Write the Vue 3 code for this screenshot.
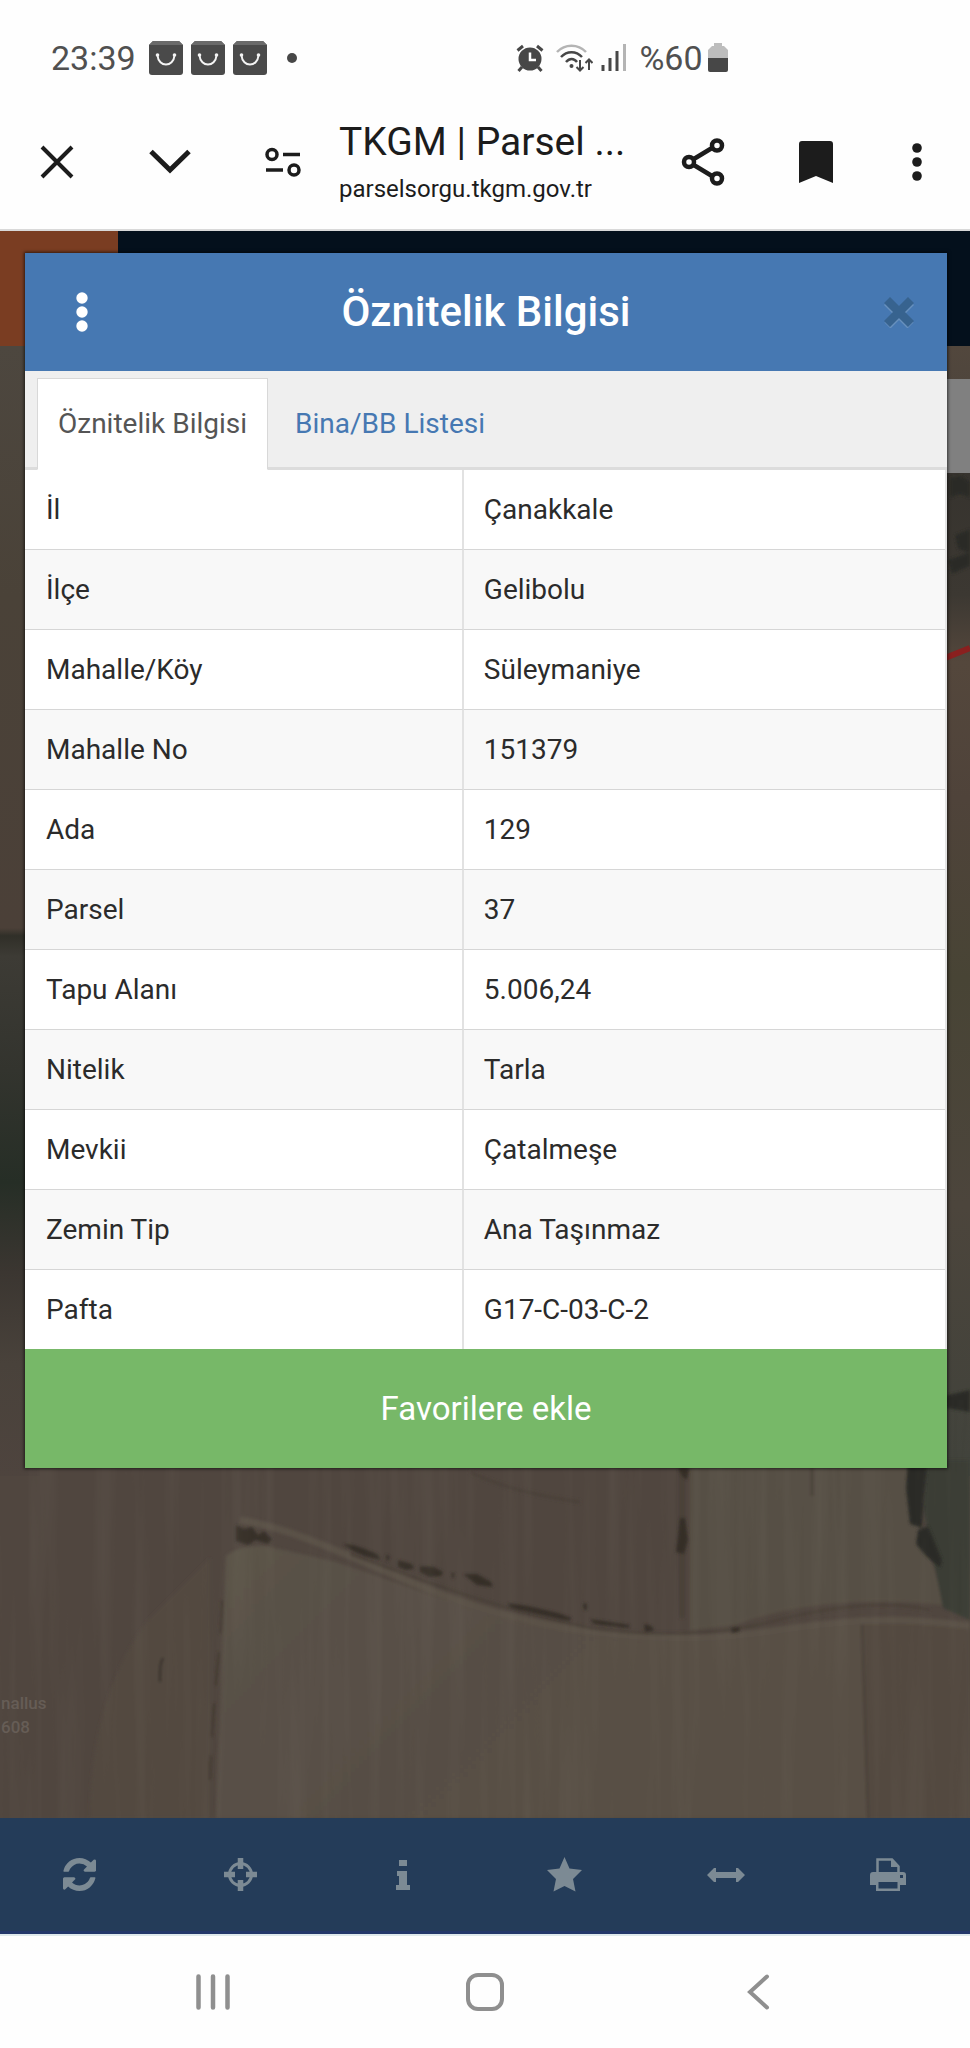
<script setup>
import { ref } from 'vue'

const rows = [
  ['İl', 'Çanakkale'],
  ['İlçe', 'Gelibolu'],
  ['Mahalle/Köy', 'Süleymaniye'],
  ['Mahalle No', '151379'],
  ['Ada', '129'],
  ['Parsel', '37'],
  ['Tapu Alanı', '5.006,24'],
  ['Nitelik', 'Tarla'],
  ['Mevkii', 'Çatalmeşe'],
  ['Zemin Tip', 'Ana Taşınmaz'],
  ['Pafta', 'G17-C-03-C-2'],
]

const tabs = ['Öznitelik Bilgisi', 'Bina/BB Listesi']
const activeTab = ref(0)
</script>

<template>
  <div class="screen">
    <div class="status">
      <div class="status-group">
        <span class="status-text">23:39</span>
        <div class="bags">
          <svg v-for="n in 3" :key="n" width="34" height="34" viewBox="0 0 34 34">
            <path d="M4 0h26l4 4v27a3 3 0 0 1-3 3H3a3 3 0 0 1-3-3V4z" fill="#4a4a4a" />
            <path d="M4 0h26l4 4H0z" fill="#6a6a6a" />
            <path d="M8.500 14.500c1 12 16 12 17 0" fill="none" stroke="#f4f4f4" stroke-width="2" />
            <circle cx="8.500" cy="14" r="1.800" fill="#f4f4f4" />
            <circle cx="25.500" cy="14" r="1.800" fill="#f4f4f4" />
          </svg>
        </div>
        <span class="dot"></span>
      </div>
      <div class="status-group">
        <svg class="alarm" width="28" height="28" viewBox="0 0 28 28" fill="none" stroke="#474747">
          <circle cx="14" cy="15" r="11.500" fill="#474747" stroke="none" />
          <path d="M1.500 6.500 7 2M26.500 6.500 21 2M6 23l-3.500 4M22 23l3.500 4" stroke-width="3" />
          <path d="M14 8.500V16h6" stroke="#fff" stroke-width="2.500" />
        </svg>
        <svg class="wifi" width="37" height="28" viewBox="0 0 37 28" fill="none" stroke="#474747" stroke-width="2.500">
          <path d="M1 8c8-8.500 21-8.500 29 0" stroke="#b4b4b4" />
          <path d="M5 13c6-6.500 15-6.500 21 0M10 18c3.500-4 8-4 11 0" />
          <circle cx="15.500" cy="22" r="2" fill="#474747" stroke="none" />
          <path d="M24 16v10M20.500 23l3.500 3.500 3.500-3.500M33 26V16M29.500 19l3.500-3.500 3.500 3.500" stroke-width="2" />
        </svg>
        <svg class="signal" width="26" height="27" viewBox="0 0 26 27" stroke-width="3" stroke="#474747">
          <path d="M2 21v6M9 14v13M16 7v20" />
          <path d="M23.500 0v27" stroke="#b4b4b4" />
        </svg>
        <span class="status-text">%60</span>
        <svg class="battery" width="20" height="29" viewBox="0 0 20 29">
          <path d="M6 0h8v3h2l4 4v9H0V7l4-4h2z" fill="#bdbdbd" />
          <path d="M0 15h20v12a2 2 0 0 1-2 2H2a2 2 0 0 1-2-2z" fill="#474747" />
        </svg>
      </div>
    </div>

    <header class="browser">
      <button class="tool" aria-label="Kapat">
        <svg width="34" height="34" viewBox="0 0 34 34" fill="none" stroke="#1c1c1c" stroke-width="4">
          <path d="M2 2l30 30M32 2 2 32" />
        </svg>
      </button>
      <button class="tool" aria-label="Küçült">
        <svg width="44" height="28" viewBox="0 0 44 28" fill="none" stroke="#1c1c1c" stroke-width="5">
          <path d="M3 3.500l19 18.500 19-18.500" />
        </svg>
      </button>
      <button class="tool" aria-label="Site ayarları">
        <svg width="36" height="30" viewBox="0 0 36 30" fill="none" stroke="#1c1c1c" stroke-width="3.500">
          <circle cx="7" cy="7.500" r="5" />
          <circle cx="29" cy="23" r="5" />
          <path d="M18 7.500h17M1 23h17" />
        </svg>
      </button>
      <div class="address">
        <div class="page-title">TKGM | Parsel ...</div>
        <div class="page-url">parselsorgu.tkgm.gov.tr</div>
      </div>
      <button class="tool" aria-label="Paylaş">
        <svg width="44" height="48" viewBox="0 0 44 48" fill="none" stroke="#1c1c1c" stroke-width="4.500">
          <path d="M12 21.500 31 10M12 26.500 31 38" />
          <circle cx="8" cy="24" r="5" />
          <circle cx="36" cy="7.500" r="5" />
          <circle cx="36" cy="40.500" r="5" />
        </svg>
      </button>
      <button class="tool" aria-label="Yer imi">
        <svg width="34" height="42" viewBox="0 0 34 42">
          <path d="M3 0h28a3 3 0 0 1 3 3v39l-17-7-17 7V3a3 3 0 0 1 3-3z" fill="#1c1c1c" />
        </svg>
      </button>
      <button class="tool narrow" aria-label="Menü">
        <svg width="10" height="38" viewBox="0 0 10 38" fill="#1c1c1c">
          <circle cx="5" cy="5" r="4.800" />
          <circle cx="5" cy="19" r="4.800" />
          <circle cx="5" cy="33" r="4.800" />
        </svg>
      </button>
    </header>

    <main class="stage">
      <div class="backdrop">
        <div class="site-bar"><span class="site-logo"></span></div>
        <svg class="map" viewBox="0 346 970 1472" preserveAspectRatio="xMidYMax slice">
          <defs>
            <linearGradient id="leftEdge" x1="0" y1="0" x2="0" y2="1">
              <stop offset="0" stop-color="#4d473f" />
              <stop offset="0.220" stop-color="#4a4238" />
              <stop offset="0.515" stop-color="#4b4038" />
              <stop offset="0.522" stop-color="#302f28" />
              <stop offset="0.540" stop-color="#3d3b35" />
              <stop offset="0.640" stop-color="#33342e" />
              <stop offset="0.740" stop-color="#262e26" />
              <stop offset="0.820" stop-color="#3b3631" />
              <stop offset="0.900" stop-color="#49423b" />
              <stop offset="1" stop-color="#4e443e" />
            </linearGradient>
            <linearGradient id="rightEdge" x1="0" y1="0" x2="0" y2="1">
              <stop offset="0" stop-color="#52473d" />
              <stop offset="0.080" stop-color="#4a433c" />
              <stop offset="0.110" stop-color="#36332e" />
              <stop offset="0.220" stop-color="#3c3832" />
              <stop offset="0.280" stop-color="#54473c" />
              <stop offset="0.400" stop-color="#4f433a" />
              <stop offset="0.560" stop-color="#484435" />
              <stop offset="0.760" stop-color="#4c453c" />
              <stop offset="1" stop-color="#40423b" />
            </linearGradient>
            <linearGradient id="lowerField" x1="0" y1="0" x2="1" y2="0.400">
              <stop offset="0" stop-color="#5a5247" />
              <stop offset="0.500" stop-color="#574e45" />
              <stop offset="1" stop-color="#584f44" />
            </linearGradient>
            <filter id="streaks" x="0" y="0" width="1" height="1">
              <feTurbulence type="fractalNoise" baseFrequency="0.060 0.003" numOctaves="3" seed="4" />
              <feColorMatrix values="0 0 0 0 0.500  0 0 0 0 0.480  0 0 0 0 0.400  1.600 0 0 0 -0.680" />
            </filter>
            <filter id="soft"><feGaussianBlur stdDeviation="1.500" /></filter>
          </defs>

          <rect x="0" y="346" width="970" height="1472" fill="#50463f" />
          <rect x="0" y="346" width="40" height="1130" fill="url(#leftEdge)" />
          <rect x="930" y="346" width="40" height="1130" fill="url(#rightEdge)" />

          <g filter="url(#soft)">
            <path d="M90 1818c0-80 20-150 60-200l60-60v260z" fill="#524940" />
            <path d="M690 1460h215l20 80 20 65c-80-8-150-2-210 20l-45 5z" fill="#575045" />
            <path d="M925 1460h45v160l-27-12-20-100z" fill="#3b3c36" />
            <path d="M226 1556q12-11 40-10l70 16 95 33 90 28 100 15h80l90-10 71-11 6 201H216z" fill="url(#lowerField)" />
            <path d="M862 1620q40-12 108 10v188H868z" fill="#52483f" />
            <path d="M862 1624l6 194" stroke="#473e37" stroke-width="2" />
            <path d="M240 1520c60 10 110 38 190 70s170 48 260 48 150-30 280-12" fill="none" stroke="#5a5147" stroke-width="7" />
            <path d="M350 1554c80 30 160 58 240 74 60 9 130 7 180-6s110-24 160-12" fill="none" stroke="#463e36" stroke-width="2" />
            <path d="M682 1468v150" stroke="#483f39" stroke-width="5" />
            <path d="M222 1600c-1 50-10 100-12 180" fill="none" stroke="#40372f" stroke-width="2" stroke-dasharray="34 18" />
            <path d="M163 1658c-4 6-3 16-3 24" fill="none" stroke="#332c27" stroke-width="2" />
            <path d="M470 1472q40 20 110 30" fill="none" stroke="#4a4039" stroke-width="3" />
            <path d="M812 1468v28" stroke="#49423a" stroke-width="3" />
          </g>

          <g fill="#352d28" filter="url(#soft)">
            <path d="M236 1525l8 4 8-2 6 8 6-4 8 8-4 5-12-4-8 5-12-4z" />
            <path d="M343 1544l10 1 12 4 12 5 4 6-14-3-14-6z" />
            <path d="M386 1554l4 3-3 5zM398 1560l14 4 2 5-8 1-8-3z" />
            <path d="M420 1566l14 1 9 5-2 4-12 1-9-5z" />
            <path d="M451 1573l4 0-2 7zM463 1574l14 0 14 8 2 5-16-2z" />
            <path d="M508 1603l20 3 30 7 14 5-4 3-26-6-32-7z" />
            <path d="M590 1619l40 6-2 3-34-4zM644 1624l8 2 2 5-9 1zM731 1628l8-1 1 4-8 2z" />
            <path d="M583 1604l4-1v7h-3z" />
            <path d="M678 1468h11l-2 12-5-4zM680 1518l5 0 3 22-4 14-8-2 2-14z" />
          </g>
          <g fill="#2a2c28" filter="url(#soft)">
            <path d="M908 1460h20l-4 36-2 32-12-4-4-36z" />
            <path d="M918 1530l10-4 6 14 8 20-2 8-14-12-10-12z" />
            <path d="M950 478l12-2 8 6v16l-10-4-10 4zM955 535l15-6v24l-12-4zM948 560l22-8v14l-18 8z" />
            <path d="M944 1396l26-6v22l-24-4z" />
          </g>
          <path d="M930 664l40-16" stroke="#8a201f" stroke-width="6" />
          <rect x="0" y="1400" width="970" height="418" filter="url(#streaks)" opacity="0.070" />
          <rect x="945" y="379" width="25" height="94" fill="#808080" />
          <g class="map-label">
            <text x="1" y="1709">nallus</text>
            <text x="1" y="1733">608</text>
          </g>
        </svg>

        <nav class="map-tools">
          <button aria-label="Yenile">
            <svg width="33" height="33" viewBox="0 128 1536 1536" fill="currentColor">
              <path d="M1511 1056q0 5-1 7-64 268-268 434.500t-478 166.500q-146 0-282.500-55t-243.500-157l-129 129q-19 19-45 19t-45-19-19-45v-448q0-26 19-45t45-19h448q26 0 45 19t19 45-19 45l-137 137q71 66 161 102t187 36q134 0 250-65t186-179q11-17 53-117 8-23 30-23h192q13 0 22.500 9.500t9.500 22.500zm25-800v448q0 26-19 45t-45 19h-448q-26 0-45-19t-19-45 19-45l138-138q-148-137-349-137-134 0-250 65t-186 179q-11 17-53 117-8 23-30 23h-199q-13 0-22.500-9.500t-9.500-22.500v-7q65-268 270-434.500t480-166.500q146 0 284 55.500t245 156.500l130-129q19-19 45-19t45 19 19 45z" />
            </svg>
          </button>
          <button aria-label="Konum">
            <svg width="33" height="33" viewBox="0 0 33 33" fill="none" stroke="currentColor">
              <circle cx="16.500" cy="16.500" r="11" stroke-width="3" />
              <path d="M16.500 0v11M16.500 22v11M0 16.500h11M22 16.500h11" stroke-width="5.500" />
            </svg>
          </button>
          <button aria-label="Bilgi">
            <svg width="14" height="32" viewBox="0 0 14 32" fill="currentColor">
              <path d="M3 1h8v6H3zM1 12h10v14h3v5H0v-5h3v-9H1z" />
            </svg>
          </button>
          <button aria-label="Favoriler">
            <svg width="35" height="35" viewBox="0 0 35 35" fill="currentColor">
              <path d="M17.500 0l5 11.500L35 13l-9 9 2.500 12.500-11-5.500-11 5.500L9 22l-9-9 12.500-1.500z" />
            </svg>
          </button>
          <button aria-label="Ölçüm">
            <svg width="38" height="14" viewBox="0 0 38 14" fill="currentColor">
              <path d="M7 0h2v4h20V0h2l7 7-7 7h-2v-4H9v4H7L0 7z" />
            </svg>
          </button>
          <button aria-label="Yazdır">
            <svg width="36" height="33" viewBox="0 0 36 33">
              <path d="M7.500 17V1.500H22l6.500 7V17" fill="none" stroke="currentColor" stroke-width="2.500" />
              <path d="M21 1l8 8h-8z" fill="currentColor" />
              <path fill-rule="evenodd" d="M3 14h30a3 3 0 0 1 3 3v10h-6v6H6v-6H0V17a3 3 0 0 1 3-3zM8.500 24v6.500h19V24zM30 17v3h3v-3z" fill="currentColor" />
            </svg>
          </button>
        </nav>
      </div>

      <section class="dialog" role="dialog" aria-labelledby="dialogTitle">
        <div class="dialog-head">
          <button class="head-button" aria-label="Seçenekler">
            <svg width="12" height="40" viewBox="0 0 12 40" fill="#fff">
              <circle cx="6" cy="6" r="5.700" />
              <circle cx="6" cy="20" r="5.700" />
              <circle cx="6" cy="34" r="5.700" />
            </svg>
          </button>
          <h1 id="dialogTitle">Öznitelik Bilgisi</h1>
          <button class="head-button end" aria-label="Kapat">
            <svg width="30" height="31" viewBox="0 0 30 31" fill="none" stroke-width="8.500">
              <path d="M3 5l23.500 23.500M27 5 3.500 28.500" stroke="#6790bd" />
              <path d="M3 3l24 24M27 3 3 27" stroke="#37638f" />
            </svg>
          </button>
        </div>

        <div class="tabs" role="tablist">
          <button
            v-for="(tab, i) in tabs"
            :key="tab"
            class="tab"
            :class="{ active: i === activeTab }"
            role="tab"
            :aria-selected="i === activeTab"
            @click="activeTab = i"
          >{{ tab }}</button>
        </div>

        <table class="details">
          <tbody>
            <tr v-for="[label, value] in rows" :key="label">
              <th scope="row">{{ label }}</th>
              <td>{{ value }}</td>
            </tr>
          </tbody>
        </table>

        <button class="favorite">Favorilere ekle</button>
      </section>
    </main>

    <nav class="system-nav">
      <button aria-label="Son uygulamalar">
        <svg width="34" height="36" viewBox="0 0 34 36" stroke="#8f8f8f" stroke-width="4.500" stroke-linecap="round">
          <path d="M2.500 2.500v31M17 2.500v31M31.500 2.500v31" />
        </svg>
      </button>
      <button aria-label="Ana ekran">
        <svg width="38" height="38" viewBox="0 0 38 38" fill="none" stroke="#8f8f8f" stroke-width="4">
          <rect x="2" y="2" width="34" height="34" rx="10" />
        </svg>
      </button>
      <button aria-label="Geri">
        <svg width="28" height="36" viewBox="0 0 28 36" fill="none" stroke="#8f8f8f" stroke-width="4" stroke-linecap="round">
          <path d="M24 2.500 7 18l17 15.500" />
        </svg>
      </button>
    </nav>
  </div>
</template>

<style>
body {
  margin: 0;
  background: #fefefe;
}
</style>

<style scoped>
.screen {
  display: flex;
  flex-direction: column;
  min-height: 100vh;
  background: #fefefe;
  font-family: Roboto, "Liberation Sans", sans-serif;
  color: #1c1c1c;
}

button {
  margin: 0;
  padding: 0;
  border: 0;
  background: none;
  font: inherit;
  color: inherit;
}

svg {
  display: block;
}

.status {
  display: flex;
  justify-content: space-between;
  box-sizing: border-box;
  height: 95px;
  padding: 20px 25% 0 51px;
}

.status-group {
  display: flex;
  align-items: center;
}

.status-text {
  font-size: 34px;
  line-height: 40px;
  color: #505050;
}

.bags {
  display: flex;
  gap: 8px;
  margin-left: 13px;
}

.dot {
  width: 10px;
  height: 10px;
  margin-left: 20px;
  border-radius: 50%;
  background: #474747;
}

.wifi {
  margin-left: 12px;
}

.signal {
  margin: 0 12px 0 8px;
}

.battery {
  margin-left: 5px;
}

.browser {
  display: flex;
  align-items: center;
  height: 134px;
  padding-right: 8px;
  border-bottom: 2px solid #d9d9d9;
}

.tool {
  display: grid;
  place-items: center;
  flex: 0 0 113px;
  height: 100%;
}

.tool.narrow {
  flex-basis: 90px;
}

.address {
  flex: 1;
  min-width: 0;
  white-space: nowrap;
  overflow: hidden;
}

.page-title {
  padding-top: 6px;
  font-size: 39px;
  line-height: 48px;
}

.page-url {
  font-size: 24px;
  line-height: 46px;
}

.stage {
  display: grid;
  flex: 1;
}

.backdrop,
.dialog {
  grid-area: 1 / 1;
}

.backdrop {
  display: flex;
  flex-direction: column;
  min-width: 0;
}

.site-bar {
  height: 115px;
  background: #04101c;
}

.site-logo {
  display: block;
  width: 118px;
  height: 100%;
  background: #7a3d22;
}

.map {
  flex: 1;
  width: 100%;
  height: 0;
  min-height: 0;
}

.map-label {
  font-size: 17px;
  font-weight: 500;
  fill: #665d56;
}

.map-tools {
  display: grid;
  grid-template-columns: repeat(6, 1fr);
  box-sizing: border-box;
  height: 116px;
  border-bottom: 3px solid #24386a;
  background: #243c59;
  color: #7c8a94;
}

.map-tools button {
  display: grid;
  place-items: center;
  padding-right: 3px;
}

.dialog {
  align-self: start;
  margin: 22px 23px 0 25px;
  background: #fff;
  box-shadow: 0 0 3px 1px rgba(0, 0, 0, 0.6);
}

.dialog-head {
  display: grid;
  grid-template-columns: 1fr auto 1fr;
  align-items: center;
  height: 118px;
  background: #4678b2;
  color: #fff;
}

.dialog-head h1 {
  margin: 0;
  font-size: 42px;
  line-height: 48px;
  font-weight: 500;
}

.head-button {
  justify-self: start;
  padding: 24px 51px;
}

.head-button.end {
  justify-self: end;
  padding: 24px 33px;
}

.tabs {
  display: flex;
  gap: 6px;
  box-sizing: border-box;
  height: 99px;
  padding: 7px 0 0 12px;
  border-bottom: 3px solid #dcdcdc;
  background: #efefef;
}

.tab {
  height: 92px;
  padding: 0 20px;
  border: 1px solid transparent;
  font-size: 28px;
  line-height: 32px;
  color: #4678b2;
}

.tab.active {
  border-color: #d8d8d8;
  border-bottom-color: #fff;
  background: #fff;
  color: #555;
}

.details {
  width: 100%;
  border-collapse: separate;
  border-spacing: 0;
  border-right: 2px solid #e4e4e4;
  font-size: 28px;
  line-height: 32px;
  color: #2b2b2b;
  table-layout: fixed;
}

.details th,
.details td {
  box-sizing: border-box;
  height: 80px;
  padding: 0 20px;
  border-bottom: 1px solid #d6d6d6;
  font-weight: 400;
  text-align: left;
}

.details th {
  width: 47.7%;
  padding-left: 21px;
  border-right: 2px solid #e2e2e2;
}

.details tr:nth-child(even) {
  background: #f8f8f8;
}

.details tr:last-child th,
.details tr:last-child td {
  height: 79px;
  border-bottom: 0;
}

.favorite {
  display: block;
  width: 100%;
  height: 119px;
  background: #77b868;
  color: #fff;
  font-size: 33px;
  line-height: 40px;
}

.system-nav {
  display: grid;
  grid-template-columns: repeat(3, 1fr);
  height: 112px;
  padding: 0 8%;
  border-top: 2px solid #dfe9ec;
}

.system-nav button {
  display: grid;
  place-items: center;
}
</style>
